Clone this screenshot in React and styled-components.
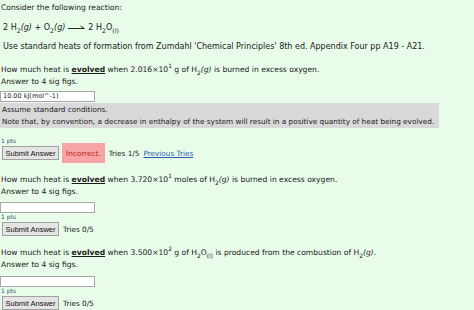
import React from "react";
import styled, { createGlobalStyle } from "styled-components";

const Global = createGlobalStyle`
  html, body { margin: 0; padding: 0; background: #e8fce9; }
  body { font-family: "DejaVu Sans", Verdana, sans-serif; font-size: 7.6px; color: #1a1a1a; }
  sub, sup { line-height: 0; font-size: 78%; }
`;

const Page = styled.div`
  display: flex;
  flex-direction: column;
  padding: 2px 0 0 1px;
`;

const Line = styled.div`
  line-height: 12px;
  height: 12px;
  padding-left: ${(p) => p.$indent || 0}px;
  margin-top: ${(p) => p.$mt || 0}px;
  font-size: ${(p) => p.$size || 7.6}px;
  white-space: nowrap;
`;

const Arrow = styled.svg`
  width: 17px;
  height: 6px;
  margin: 0 3px 0 3px;
  vertical-align: middle;
`;

const Evolved = styled.b`
  text-decoration: underline;
`;

const AnswerInput = styled.div`
  width: 91px;
  height: 9px;
  border: 1px solid #a8a8a8;
  background: #fff;
  font-size: 6.5px;
  line-height: 9px;
  padding-left: 2px;
  margin-top: ${(p) => p.$mt || 0}px;
  margin-left: -1px;
`;

const Hint = styled.div`
  align-self: flex-start;
  background: #d9d9d9;
  margin-top: 1px;
  margin-left: -1px;
  padding: 1px 5px 0 2px;
  line-height: 12px;
  font-size: 7.3px;
  white-space: nowrap;
`;

const Pts = styled.div`
  font-size: 6px;
  color: #2f4f74;
  line-height: 8px;
  height: 8px;
  margin-top: ${(p) => p.$mt || 0}px;
`;

const Row = styled.div`
  display: flex;
  align-items: center;
  gap: 3px;
  margin-top: ${(p) => p.$mt || 0}px;
`;

const SubmitButton = styled.button`
  font-family: Arial, "Liberation Sans", sans-serif;
  font-size: 7.5px;
  height: 14px;
  width: 57px;
  padding: 0;
  border: 1px solid #a0a0a0;
  background: #e4e4e4;
  color: #111;
  margin-left: 1px;
`;

const Incorrect = styled.span`
  display: flex;
  align-items: center;
  height: 20px;
  background: #f7a4a4;
  color: #c42323;
  padding: 0 4px;
  font-size: 7.3px;
`;

const Tries = styled.span`
  white-space: nowrap;
  padding-left: 1px;
  font-size: 7.3px;
`;

const Link = styled.a`
  color: #2a64b0;
  text-decoration: underline;
  margin-left: 4px;
`;

function H2g() {
  return (
    <>
      H<sub>2</sub><i>(g)</i>
    </>
  );
}

export default function App() {
  return (
    <>
      <Global />
      <Page>
        <Line>Consider the following reaction:</Line>
        <Line $mt={8} $indent={2} $size={8}>
          2 H<sub>2</sub><i>(g)</i> + O<sub>2</sub><i>(g)</i>
          <Arrow viewBox="0 0 17 6">
            <path d="M0 3.5 H16" stroke="#111" strokeWidth="0.9" fill="none" />
            <path d="M12.5 1 L16.5 3.5" stroke="#111" strokeWidth="0.9" fill="none" />
          </Arrow>
          2 H<sub>2</sub>O<sub>(l)</sub>
        </Line>
        <Line $mt={7} $indent={2} $size={8}>
          Use standard heats of formation from Zumdahl 'Chemical Principles' 8th ed. Appendix Four pp A19 - A21.
        </Line>
        <Line $mt={11}>
          How much heat is <Evolved>evolved</Evolved> when 2.016×10<sup>1</sup> g of <H2g /> is burned in excess oxygen.
        </Line>
        <Line>Answer to 4 sig figs.</Line>
        <AnswerInput $mt={3}>10.00 kJ(mol^-1)</AnswerInput>
        <Hint>
          Assume standard conditions.
          <br />
          Note that, by convention, a decrease in enthalpy of the system will result in a positive quantity of heat being evolved.
        </Hint>
        <Pts $mt={9}>1 pts</Pts>
        <Row $mt={-2}>
          <SubmitButton>Submit Answer</SubmitButton>
          <Incorrect>Incorrect.</Incorrect>
          <Tries>
            Tries 1/5<Link>Previous Tries</Link>
          </Tries>
        </Row>
        <Line $mt={11}>
          How much heat is <Evolved>evolved</Evolved> when 3.720×10<sup>1</sup> moles of <H2g /> is burned in excess oxygen.
        </Line>
        <Line>Answer to 4 sig figs.</Line>
        <AnswerInput $mt={4} />
        <Pts>1 pts</Pts>
        <Row $mt={1}>
          <SubmitButton>Submit Answer</SubmitButton>
          <Tries>Tries 0/5</Tries>
        </Row>
        <Line $mt={11}>
          How much heat is <Evolved>evolved</Evolved> when 3.500×10<sup>2</sup> g of H<sub>2</sub>O<sub>(l)</sub> is produced from the combustion of <H2g />.
        </Line>
        <Line>Answer to 4 sig figs.</Line>
        <AnswerInput $mt={5} />
        <Pts>1 pts</Pts>
        <Row $mt={1}>
          <SubmitButton>Submit Answer</SubmitButton>
          <Tries>Tries 0/5</Tries>
        </Row>
      </Page>
    </>
  );
}
